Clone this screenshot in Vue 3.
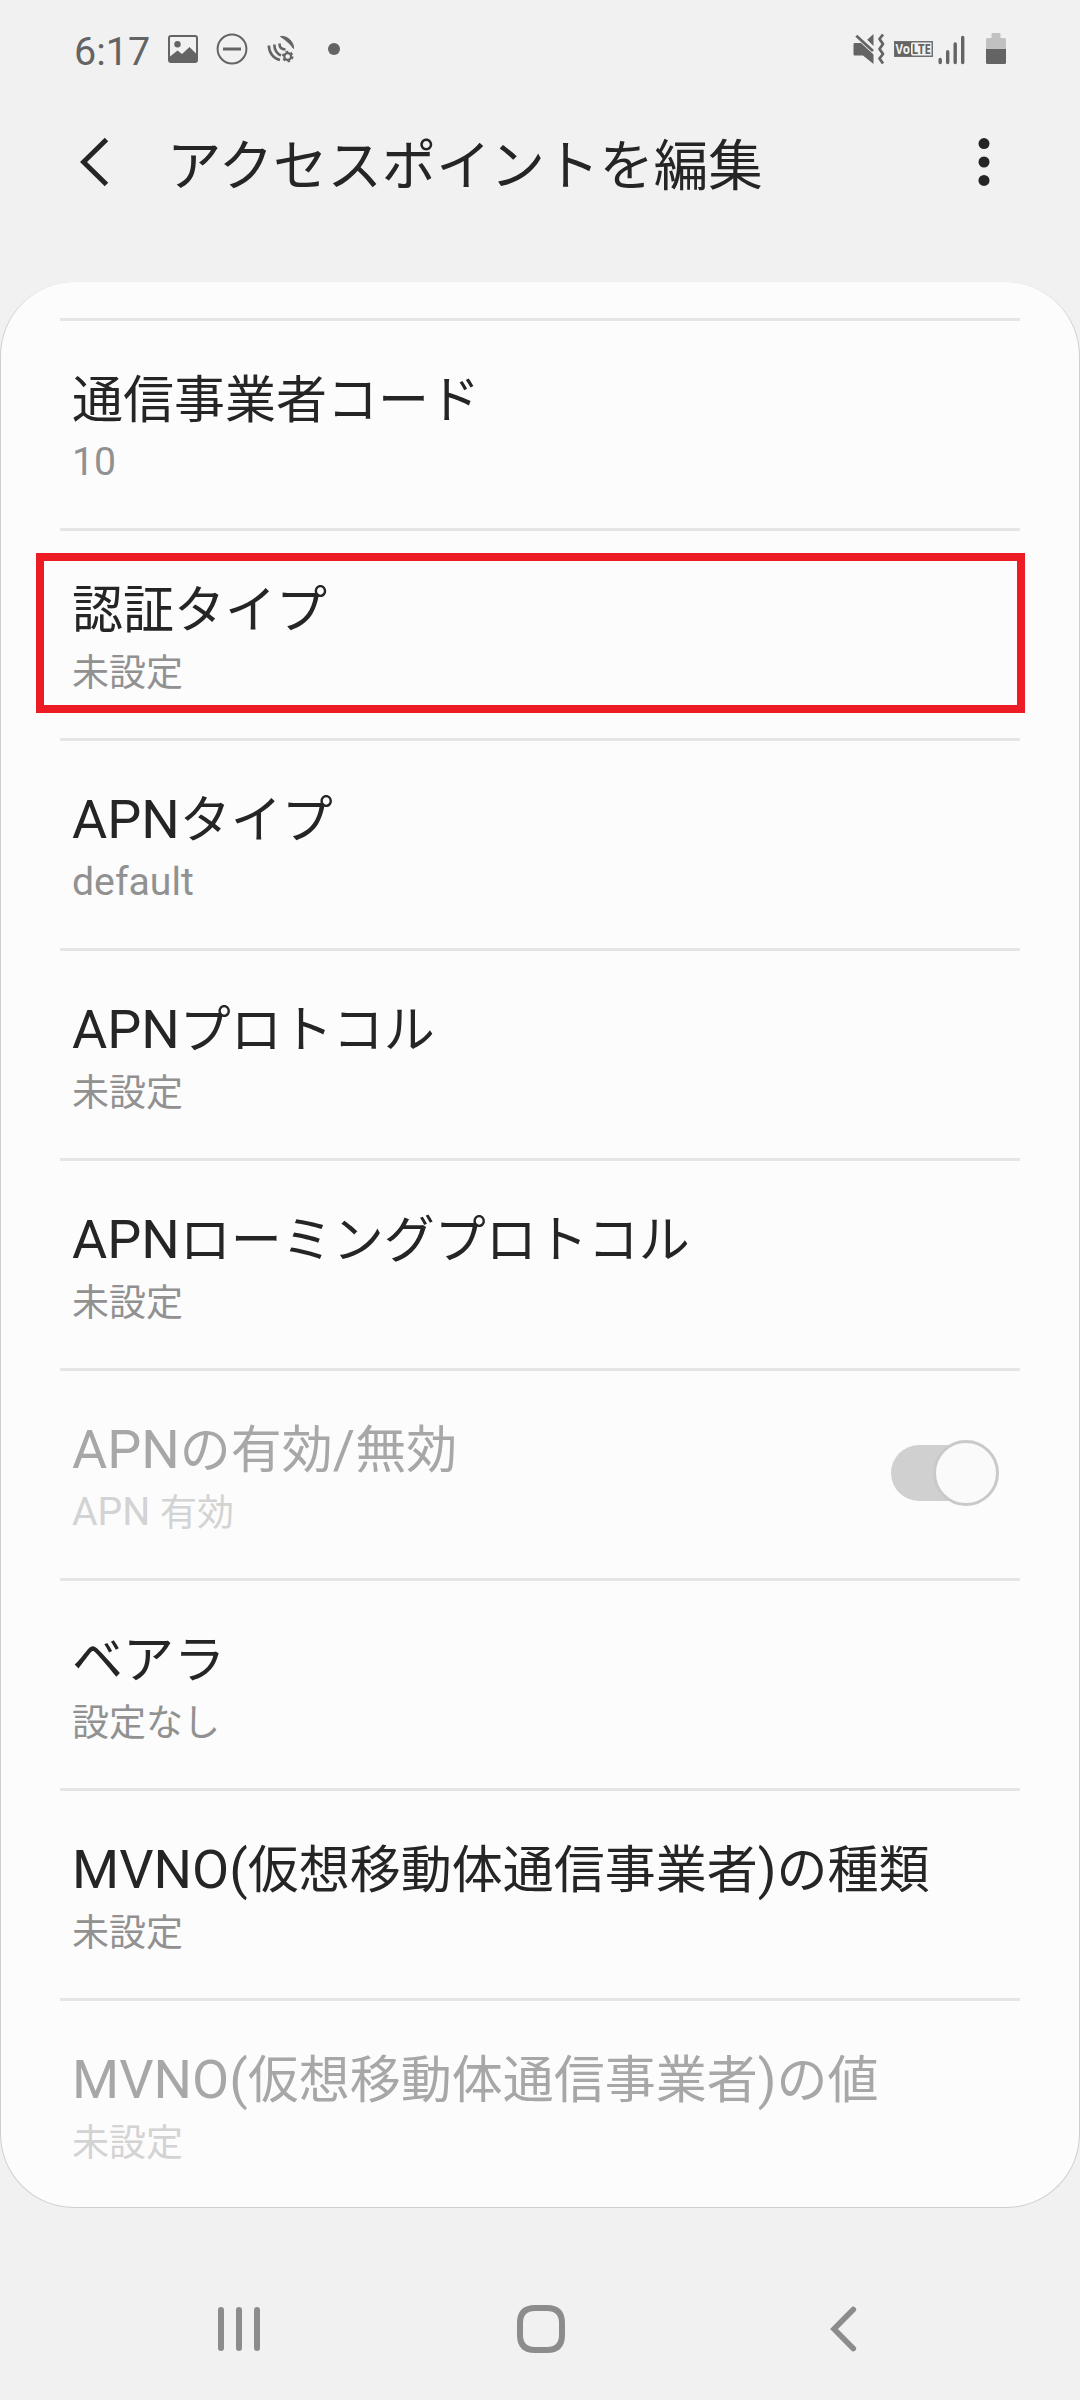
<template>
  <div class="screen">
    <header class="status-bar">
      <div class="status-left">
        <span class="clock">6:17</span>
        <svg class="icon-image" width="30" height="28" viewBox="0 0 30 28">
          <rect x="1" y="1" width="28" height="26" rx="2" fill="none" stroke="#646464" stroke-width="2" />
          <circle cx="9.5" cy="9.3" r="3.2" fill="#646464" />
          <path d="M2 21.5 L9.5 15.5 L14 19 L21.5 12 L28 18.5 V27 H2 Z" fill="#646464" />
        </svg>
        <svg class="icon-dnd" width="32" height="32" viewBox="0 0 32 32">
          <circle cx="16" cy="16" r="14.4" fill="none" stroke="#646464" stroke-width="2" />
          <path d="M7 16 H25" stroke="#646464" stroke-width="3" />
        </svg>
        <svg class="icon-satellite" width="28" height="28" viewBox="0 0 28 28">
          <path d="M13.5 1.5 C20 0.5 27 6.5 26.5 13.5 C23.5 9 19 5 13.5 1.5 Z" fill="#646464" stroke="#646464" stroke-linejoin="round" />
          <g fill="none" stroke="#646464" stroke-width="2.6">
            <path d="M1.8 10.5 C2 18 6.5 23.5 13 25" />
            <path d="M7.3 9.5 C7.5 15 9.5 18.5 14 20.5" />
            <path d="M12.5 8.5 C12.5 12.5 14.5 14.5 18.5 14.5" />
            <circle cx="20.7" cy="21.5" r="3.4" stroke-width="2.2" />
            <circle cx="20.7" cy="21.5" r="4.9" stroke-width="1.8" stroke-dasharray="2.56 2.56" />
          </g>
        </svg>
        <span class="more-dot"></span>
      </div>
      <div class="status-right">
        <svg class="icon-mute" width="32" height="32" viewBox="0 0 32 32">
          <path d="M1.5 10 H8 L20.5 21.5 V31 L10 22.5 H1.5 Q0.5 22.5 0.5 21 V11.5 Q0.5 10 1.5 10 Z M14.2 6.8 L20.5 1 V13 Z" fill="#646464" />
          <path d="M3.3 2.8 L20 18" stroke="#646464" stroke-width="2.8" />
          <path d="M30 1.5 L26.5 6 L30 11 L26.5 16 L30 21 L26.5 25.5 L30 30.5" fill="none" stroke="#646464" stroke-width="2.8" stroke-linejoin="round" />
        </svg>
        <svg class="icon-volte" width="39" height="28" viewBox="0 -6 39 28">
          <rect x="0.75" y="0.75" width="37.5" height="14.5" fill="#f1f1f1" stroke="#707070" stroke-width="1.5" />
          <path d="M1 1 H18 Q17 1.5 17 4 V12 Q17 14.5 18.5 15 H1 Z" fill="#646464" />
          <text x="1.6" y="12.9" class="volte-text" textLength="14.5" lengthAdjust="spacingAndGlyphs" fill="#f1f1f1">Vo</text>
          <text x="17.8" y="12.9" class="volte-text" textLength="19" lengthAdjust="spacingAndGlyphs" fill="#646464">LTE</text>
        </svg>
        <svg class="icon-signal" width="28" height="30" viewBox="0 0 28 30">
          <path d="M2.2 24.5 V27.5 M9.7 16.7 V27.5 M17.2 9 V27.5 M24.7 2.5 V27.5" stroke="#646464" stroke-width="3.4" stroke-linecap="round" />
        </svg>
        <svg class="icon-battery" width="20" height="32" viewBox="0 0 20 32">
          <path d="M5.5 1 Q5.5 0 6.5 0 H13.5 Q14.5 0 14.5 1 V5 H18.5 Q20 5 20 6.5 V16 H0 V6.5 Q0 5 1.5 5 H5.5 Z" fill="#c1c1c1" />
          <path d="M0 16 H20 V29.5 Q20 31 18.5 31 H1.5 Q0 31 0 29.5 Z" fill="#646464" />
        </svg>
      </div>
    </header>

    <div class="app-bar">
      <svg class="back" width="30" height="50" viewBox="0 0 30 50">
        <path d="M26.5 2.5 L3.5 25 L26.5 47.5" fill="none" stroke="#252525" stroke-width="5" />
      </svg>
      <h1 class="page-title">アクセスポイントを編集</h1>
      <svg class="menu" width="12" height="50" viewBox="0 0 12 50">
        <circle v-for="y in [6.6, 25, 43.4]" :key="y" cx="6" :cy="y" r="5.5" fill="#252525" />
      </svg>
    </div>

    <main class="card">
      <div
        class="row"
        v-for="item in items"
        :key="item.title"
        :class="{ disabled: item.disabled }"
      >
        <div class="texts">
          <div class="title">
            <span v-for="(run, i) in splitRuns(item.title)" :key="i" :class="{ jp: run.jp }">{{ run.text }}</span>
          </div>
          <div class="value">
            <span v-for="(run, i) in splitRuns(item.value)" :key="i" :class="{ jp: run.jp }">{{ run.text }}</span>
          </div>
        </div>
        <div v-if="item.toggle" class="switch"><span class="knob"></span></div>
        <div v-if="item.highlighted" class="highlight"></div>
      </div>
    </main>

    <nav class="nav-bar">
      <svg class="nav-recents" width="42" height="46" viewBox="0 0 42 46">
        <path d="M3 4 V42 M21 4 V42 M39 4 V42" stroke="#8c8c8c" stroke-width="6" stroke-linecap="round" />
      </svg>
      <svg class="nav-home" width="48" height="48" viewBox="0 0 48 48">
        <path d="M18 3 H30 Q45 3 45 18 V30 Q45 45 30 45 H18 Q3 45 3 30 V18 Q3 3 18 3 Z" fill="none" stroke="#8c8c8c" stroke-width="6" />
      </svg>
      <svg class="nav-back" width="27" height="46" viewBox="0 0 27 46">
        <path d="M23.3 3.5 L4 23 L23.3 42.5" fill="none" stroke="#8c8c8c" stroke-width="5.6" stroke-linecap="round" />
      </svg>
    </nav>
  </div>
</template>

<script setup>
const items = [
  { title: "通信事業者コード", value: "10" },
  { title: "認証タイプ", value: "未設定", highlighted: true },
  { title: "APNタイプ", value: "default" },
  { title: "APNプロトコル", value: "未設定" },
  { title: "APNローミングプロトコル", value: "未設定" },
  { title: "APNの有効/無効", value: "APN 有効", disabled: true, toggle: true },
  { title: "ベアラ", value: "設定なし" },
  { title: "MVNO(仮想移動体通信事業者)の種類", value: "未設定" },
  { title: "MVNO(仮想移動体通信事業者)の値", value: "未設定", disabled: true },
];

// Japanese glyphs are set slightly smaller than the latin ones
function splitRuns(text) {
  return text.match(/[\x20-\x7e]+|[^\x20-\x7e]+/g).map((part) => ({
    text: part,
    jp: part.charCodeAt(0) > 0x7e,
  }));
}
</script>

<style>
body {
  margin: 0;
  background: #f1f1f1;
}
</style>

<style scoped>
.screen {
  display: flex;
  flex-direction: column;
  width: 1080px;
  height: 2400px;
  background: #f1f1f1;
  font-family: Roboto, "Noto Sans CJK JP", sans-serif;
  color: #252525;
  overflow: hidden;
}
svg {
  display: block;
  flex: none;
}
.status-bar {
  display: flex;
  justify-content: space-between;
  height: 98px;
  padding: 0 74px;
}
.status-left,
.status-right {
  display: flex;
  align-items: center;
}
.clock {
  width: 94px;
  font-size: 39.5px;
  line-height: 48px;
  color: #646464;
  margin-top: 5px;
}
.icon-dnd {
  margin-left: 18px;
}
.icon-satellite {
  margin-left: 19px;
}
.more-dot {
  width: 12px;
  height: 12px;
  margin: -1px 0 0 33px;
  border-radius: 50%;
  background: #646464;
}
.icon-volte {
  margin-left: 9px;
}
.volte-text {
  font-family: "Noto Sans", sans-serif;
  font-size: 14.5px;
  font-weight: 700;
}
.icon-signal {
  margin: 2px 0 0 5px;
}
.icon-battery {
  margin-left: 20px;
}
.app-bar {
  display: flex;
  align-items: center;
  height: 128px;
  margin-bottom: 56px;
  padding: 0 90px 0 80px;
}
.page-title {
  flex: 1;
  margin: -1px 0 0 57px;
  font-family: "Noto Sans CJK JP", sans-serif;
  font-size: 54.4px;
  font-weight: 400;
  line-height: 80px;
}
.card {
  box-sizing: border-box;
  height: 1926px;
  padding: 36px 59px 0;
  border: 1px solid #cfcfcf;
  border-top: 0;
  border-radius: 74px;
  background: #fcfcfc;
}
.row {
  position: relative;
  display: flex;
  box-sizing: border-box;
  height: 210px;
  padding: 47px 21px 0 12px;
  border-top: 3px solid #e5e5e5;
}
.texts {
  flex: 1;
  white-space: nowrap;
}
.title {
  height: 63px;
  font-size: 54px;
  line-height: 63px;
}
.value {
  height: 47px;
  margin-top: 8px;
  font-size: 39.2px;
  line-height: 47px;
  color: #919191;
}
.jp {
  font-family: "Noto Sans CJK JP", sans-serif;
  line-height: 0;
}
.title .jp {
  font-size: 51px;
}
.value .jp {
  font-size: 37px;
  vertical-align: -1px;
}
.disabled .title {
  color: #a7a7a7;
}
.disabled .value {
  color: #d3d3d3;
}
.switch {
  display: flex;
  align-items: center;
  justify-content: flex-end;
  width: 108px;
  height: 56px;
  margin-top: 27px;
  border-radius: 28px;
  background: linear-gradient(to right, #d0d0d0 80px, transparent 80px);
}
.knob {
  box-sizing: border-box;
  flex: none;
  width: 66px;
  height: 66px;
  border: 3px solid #c9c9c9;
  border-radius: 50%;
  background: #fafafa;
}
/* callout frame laid over the row */
.highlight {
  position: absolute;
  top: 22px;
  left: -24px;
  right: -5px;
  box-sizing: border-box;
  height: 160px;
  border: 8px solid #ed1c24;
}
.nav-bar {
  display: flex;
  flex: none;
  align-items: center;
  justify-content: space-between;
  height: 48px;
  margin-top: 97px;
  padding: 0 223px 0 218px;
}
.nav-home {
  margin-right: 8px;
}
</style>
